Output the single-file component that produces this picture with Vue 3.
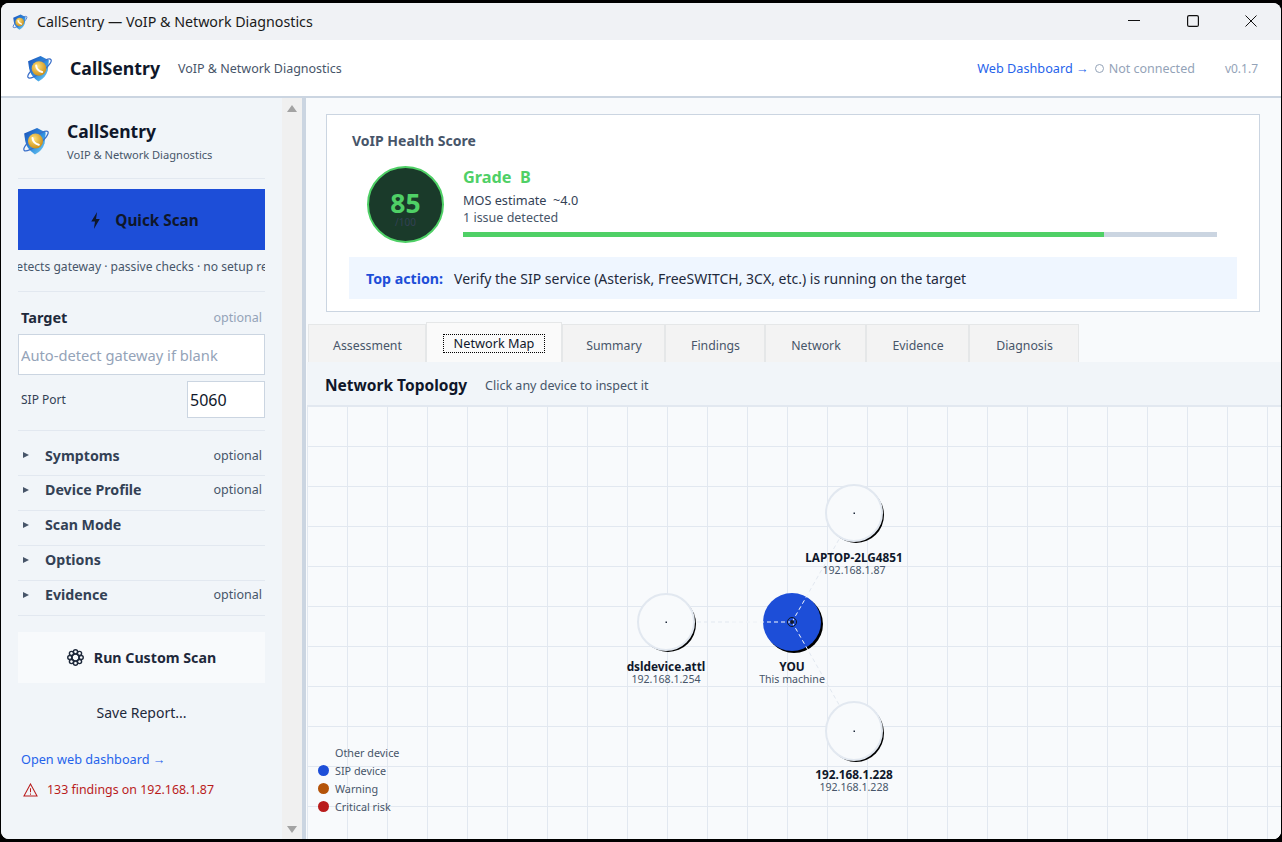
<template>
  <div class="window">
    <svg width="0" height="0" class="defs">
      <defs>
        <linearGradient id="shieldFill" x1="0" y1="0" x2="1" y2="1">
          <stop offset="0" stop-color="#1b4fb8" />
          <stop offset="0.55" stop-color="#2f8ede" />
          <stop offset="1" stop-color="#7fd6f5" />
        </linearGradient>
        <radialGradient id="coinFill" cx="0.4" cy="0.35" r="0.7">
          <stop offset="0" stop-color="#ffe27a" />
          <stop offset="1" stop-color="#c98a12" />
        </radialGradient>
        <g id="appLogo">
          <path d="M2 6 L14 1 L22 5 L21 15 Q19 22 12 25.5 Q4 20 3 13 Z" fill="url(#shieldFill)" />
          <ellipse cx="13" cy="13" rx="14" ry="4" transform="rotate(-38 13 13)" fill="none" stroke="#3a6fc9" stroke-width="1.2" />
          <circle cx="12.5" cy="13" r="7" fill="url(#coinFill)" />
          <path d="M9.8 10.2 Q10.2 15 15.6 16.4" fill="none" stroke="#fff" stroke-width="1.9" stroke-linecap="round" />
        </g>
      </defs>
    </svg>

    <div class="titlebar">
      <svg class="logo logo--title" viewBox="0 0 26 26"><use href="#appLogo" /></svg>
      <span class="titlebar-text">CallSentry — VoIP &amp; Network Diagnostics</span>
      <div class="win-controls">
        <svg viewBox="0 0 12 12" class="win-btn"><path d="M0 5.5 H12" stroke="#111" stroke-width="1" /></svg>
        <svg viewBox="0 0 12 12" class="win-btn"><rect x="0.6" y="0.6" width="10.8" height="10.8" rx="1.5" fill="none" stroke="#111" stroke-width="1.2" /></svg>
        <svg viewBox="0 0 12 12" class="win-btn"><path d="M0.5 0.5 L11.5 11.5 M11.5 0.5 L0.5 11.5" stroke="#111" stroke-width="1" /></svg>
      </div>
    </div>

    <header class="appbar">
      <svg class="logo logo--app" viewBox="0 0 26 26"><use href="#appLogo" /></svg>
      <span class="appbar-name">CallSentry</span>
      <span class="appbar-sub">VoIP &amp; Network Diagnostics</span>
      <div class="appbar-right">
        <span class="link">Web Dashboard →</span>
        <span class="status"><i class="status-dot"></i>Not connected</span>
        <span class="version">v0.1.7</span>
      </div>
    </header>

    <div class="body">
      <aside class="sidebar">
        <div class="brand">
          <svg class="logo logo--side" viewBox="0 0 26 26"><use href="#appLogo" /></svg>
          <div>
            <div class="brand-name">CallSentry</div>
            <div class="brand-sub">VoIP &amp; Network Diagnostics</div>
          </div>
        </div>

        <button class="quick-scan">
          <svg viewBox="0 0 10 16" class="bolt"><path d="M6.5 0 L1 9 H4.5 L3.5 16 L9 6.5 H5.5 Z" fill="#0f172a" /></svg>
          Quick Scan
        </button>
        <div class="quick-hint"><span>Auto-detects gateway · passive checks · no setup required</span></div>

        <div class="target">
          <div class="target-head">
            <span class="target-label">Target</span>
            <span class="muted">optional</span>
          </div>
          <input class="field field--target" placeholder="Auto-detect gateway if blank" />
          <div class="port-row">
            <span>SIP Port</span>
            <input class="field field--port" value="5060" />
          </div>
        </div>

        <div v-for="(s, i) in sections" :key="s.name" class="section" :class="{ 'section--first': i === 0 }">
          <span class="caret"></span>
          <span class="section-name">{{ s.name }}</span>
          <span v-if="s.optional" class="section-opt">optional</span>
        </div>

        <button class="custom-scan">
          <svg viewBox="0 0 18 18" class="gear">
            <g fill="none" stroke="#1e293b" stroke-width="1.5">
              <circle v-for="a in petals" :key="a" :cx="9 + 6 * Math.cos(a)" :cy="9 + 6 * Math.sin(a)" r="2.2" />
              <circle cx="9" cy="9" r="3.6" />
            </g>
          </svg>
          Run Custom Scan
        </button>
        <div class="save-report">Save Report...</div>
        <div class="open-web">Open web dashboard →</div>
        <div class="findings">
          <svg viewBox="0 0 16 15" class="warn"><path d="M8 1 L15 14 H1 Z M8 5.5 V10 M8 11.3 V12.6" fill="none" stroke="#b91c1c" stroke-width="1.1" /></svg>
          <span>133 findings on 192.168.1.87</span>
        </div>
      </aside>

      <div class="scrollbar">
        <span class="arrow arrow--up"></span>
        <span class="arrow arrow--down"></span>
      </div>

      <main class="main">
        <section class="health">
          <h2 class="health-title">VoIP Health Score</h2>
          <div class="health-row">
            <div class="gauge">
              <span class="gauge-value">85</span>
              <span class="gauge-max">/100</span>
            </div>
            <div class="health-info">
              <div class="grade">Grade&nbsp; B</div>
              <div class="mos">MOS estimate&nbsp; ~4.0</div>
              <div class="issues">1 issue detected</div>
              <div class="bar"><div class="bar-fill" :style="{ width: score + '%' }"></div></div>
            </div>
          </div>
          <div class="top-action">
            <strong>Top action:</strong>
            <span>Verify the SIP service (Asterisk, FreeSWITCH, 3CX, etc.) is running on the target</span>
          </div>
        </section>

        <nav class="tabs">
          <div v-for="t in tabs" :key="t.name" class="tab" :class="{ 'tab--active': t.active }" :style="{ width: t.width + 'px' }">
            <span :class="{ focus: t.active }">{{ t.name }}</span>
          </div>
        </nav>

        <div class="topo-head">
          <span class="topo-title">Network Topology</span>
          <span class="topo-hint">Click any device to inspect it</span>
        </div>

        <div class="canvas">
          <svg class="edges" width="975" height="434">
            <line v-for="n in others" :key="'e' + n.name" :x1="you.x" :y1="you.y" :x2="n.x" :y2="n.y" class="edge" />
            <g v-for="n in others" :key="n.name">
              <ellipse :cx="n.x + 2" :cy="n.y + 2" rx="28" :ry="n.ry" fill="#000" />
              <ellipse :cx="n.x" :cy="n.y" rx="28" :ry="n.ry" fill="#f8fafc" stroke="#e2e8f0" stroke-width="2" />
              <rect :x="n.x - 0.5" :y="n.y - 0.5" width="1.5" height="1.5" fill="#1e293b" />
            </g>
            <circle :cx="you.x + 2" :cy="you.y + 2" r="29" fill="#000" />
            <circle :cx="you.x" :cy="you.y" r="29" fill="#1d4ed8" />
            <line v-for="n in others" :key="'s' + n.name" :x1="you.x" :y1="you.y" :x2="you.x + (n.x - you.x) * n.cut" :y2="you.y + (n.y - you.y) * n.cut" class="edge edge--inner" />
            <circle :cx="you.x" :cy="you.y" r="4.5" fill="none" stroke="#0f172a" />
            <circle :cx="you.x" :cy="you.y" r="2" fill="#0f172a" />
          </svg>
          <div v-for="n in labelled" :key="'l' + n.name" class="node-label" :style="{ left: n.x + 'px', top: n.y + n.offset + 'px' }">
            <div class="node-name">{{ n.name }}</div>
            <div class="node-ip">{{ n.ip }}</div>
          </div>

          <ul class="legend">
            <li v-for="l in legend" :key="l.name"><i :style="{ background: l.color }"></i>{{ l.name }}</li>
          </ul>
        </div>
      </main>
    </div>
  </div>
</template>

<script setup>
const score = 85

const sections = [
  { name: 'Symptoms', optional: true },
  { name: 'Device Profile', optional: true },
  { name: 'Scan Mode' },
  { name: 'Options' },
  { name: 'Evidence', optional: true }
]

// gear icon is just a ring of small circles
const petals = Array.from({ length: 8 }, (_, i) => (i * Math.PI) / 4)

const tabs = [
  { name: 'Assessment', width: 118 },
  { name: 'Network Map', width: 136, active: true },
  { name: 'Summary', width: 103 },
  { name: 'Findings', width: 100 },
  { name: 'Network', width: 101 },
  { name: 'Evidence', width: 103 },
  { name: 'Diagnosis', width: 110 }
]

const you = { name: 'YOU', ip: 'This machine', x: 485, y: 216, offset: 38 }
const others = [
  { name: 'LAPTOP-2LG4851', ip: '192.168.1.87', x: 547, y: 107, ry: 28, cut: 0.27, offset: 38 },
  { name: 'dsldevice.attl', ip: '192.168.1.254', x: 359, y: 216, ry: 28, cut: 0.48, offset: 38 },
  { name: '192.168.1.228', ip: '192.168.1.228', x: 547, y: 325, ry: 29, cut: 0.27, offset: 37 }
]
const labelled = [...others, you]

const legend = [
  { name: 'Other device', color: 'transparent' },
  { name: 'SIP device', color: '#1d4ed8' },
  { name: 'Warning', color: '#b45309' },
  { name: 'Critical risk', color: '#b91c1c' }
]
</script>

<style scoped>
.window {
  box-sizing: border-box;
  margin-top: 3px;
  margin-left: 1px;
  height: 836px;
  width: 1280px;
  display: flex;
  flex-direction: column;
  border-radius: 8px;
  overflow: hidden;
  background: #fff;
  font-family: "Noto Sans", "Open Sans", sans-serif;
  color: #0f172a;
}
.defs {
  position: absolute;
}
.titlebar {
  height: 37px;
  flex-shrink: 0;
  display: flex;
  align-items: center;
  background: #f0f2f5;
  padding-left: 11px;
}
.titlebar-text {
  margin-left: 9px;
  font-size: 14.25px;
  color: #1a1a1a;
}
.win-controls {
  margin-left: auto;
  display: flex;
  gap: 46.5px;
  padding: 0 24px 2px 0;
}
.win-btn {
  width: 12px;
  height: 12px;
}
.logo--title {
  width: 16px;
  height: 16px;
}
.appbar {
  height: 58px;
  flex-shrink: 0;
  box-sizing: border-box;
  border-bottom: 2px solid #cbd5e1;
  display: flex;
  align-items: center;
  padding: 0 23px 0 25px;
  background: #fff;
}
.logo--app {
  width: 27px;
  height: 27px;
}
.appbar-name {
  margin-left: 17px;
  font-size: 17.7px;
  font-weight: 700;
  color: #0f172a;
}
.appbar-sub {
  margin-left: 18px;
  font-size: 12.5px;
  color: #475569;
}
.appbar-right {
  margin-left: auto;
  display: flex;
  align-items: center;
  font-size: 12.7px;
}
.link {
  color: #2563eb;
}
.status {
  margin-left: 6px;
  display: flex;
  align-items: center;
  gap: 5px;
  color: #94a3b8;
  font-size: 12.5px;
}
.status-dot {
  width: 9px;
  height: 9px;
  box-sizing: border-box;
  border: 1px solid #94a3b8;
  border-radius: 50%;
}
.version {
  margin-left: 30px;
  color: #94a3b8;
  font-size: 12px;
}
.body {
  flex: 1;
  min-height: 0;
  display: flex;
}
.sidebar {
  width: 281px;
  flex-shrink: 0;
  box-sizing: border-box;
  background: #f1f5f9;
  padding: 0 17px;
  display: flex;
  flex-direction: column;
}
.brand {
  height: 81px;
  flex-shrink: 0;
  box-sizing: border-box;
  border-bottom: 1px solid #e2e8f0;
  display: flex;
  align-items: center;
  gap: 17px;
  padding: 5px 0 0 4px;
}
.logo--side {
  width: 28px;
  height: 28px;
}
.brand-name {
  font-size: 17.5px;
  font-weight: 700;
  line-height: 24px;
  color: #0f172a;
}
.brand-sub {
  margin-top: 4px;
  font-size: 11.1px;
  line-height: 15px;
  color: #475569;
}
.quick-scan {
  margin-top: 10px;
  height: 61px;
  flex-shrink: 0;
  border: 0;
  background: #1d4ed8;
  color: #0f172a;
  font: 700 15.3px "Noto Sans", sans-serif;
  display: flex;
  align-items: center;
  justify-content: center;
  gap: 14px;
  padding: 1px 0 0 6px;
}
.bolt {
  width: 11px;
  height: 17px;
}
.quick-hint {
  height: 42px;
  flex-shrink: 0;
  box-sizing: border-box;
  border-bottom: 1px solid #e2e8f0;
  overflow: hidden;
  display: flex;
  justify-content: center;
  padding-top: 8px;
  font-size: 12.1px;
  color: #475569;
  white-space: nowrap;
}
.quick-hint span {
  flex-shrink: 0;
}
.target {
  height: 139px;
  flex-shrink: 0;
  box-sizing: border-box;
  border-bottom: 1px solid #e2e8f0;
  padding-top: 14px;
}
.target-head {
  display: flex;
  justify-content: space-between;
  align-items: center;
  height: 22px;
  padding: 0 3px;
}
.target-label {
  font-size: 14.5px;
  font-weight: 700;
  color: #1e293b;
}
.muted {
  font-size: 12.5px;
  color: #94a3b8;
}
.field {
  box-sizing: border-box;
  background: #fff;
  border: 1px solid #cbd5e1;
  border-radius: 0;
  font: 16px "Noto Sans", sans-serif;
  color: #0f172a;
  padding: 0 2px;
  outline: none;
}
.field::placeholder {
  color: #94a3b8;
  font-size: 14.7px;
}
.field--target {
  display: block;
  width: 100%;
  height: 41px;
  margin-top: 6px;
}
.port-row {
  margin-top: 6px;
  display: flex;
  justify-content: space-between;
  align-items: center;
  padding-left: 3px;
  font-size: 12px;
  color: #334155;
}
.field--port {
  width: 78px;
  height: 37px;
}
.section {
  height: 35px;
  flex-shrink: 0;
  box-sizing: border-box;
  border-bottom: 1px solid #e2e8f0;
  display: flex;
  align-items: center;
  padding: 0 3px 7px 5px;
}
.section--first {
  height: 45px;
  padding-top: 11px;
}
.caret {
  width: 0;
  height: 0;
  border-left: 6px solid #475569;
  border-top: 3px solid transparent;
  border-bottom: 3px solid transparent;
}
.section-name {
  margin-left: 16px;
  font-size: 14.2px;
  font-weight: 700;
  color: #334155;
}
.section-opt {
  margin-left: auto;
  font-size: 12.5px;
  color: #475569;
}
.custom-scan {
  margin-top: 16px;
  height: 51px;
  flex-shrink: 0;
  border: 0;
  background: #f8fafc;
  color: #1e293b;
  font: 700 14.2px "Noto Sans", sans-serif;
  display: flex;
  align-items: center;
  justify-content: center;
  gap: 10px;
  padding: 0;
}
.gear {
  width: 17px;
  height: 17px;
}
.save-report {
  margin-top: 20px;
  text-align: center;
  font-size: 14px;
  line-height: 20px;
  color: #1e293b;
}
.open-web {
  margin-top: 27px;
  padding-left: 3px;
  font-size: 12.7px;
  line-height: 18px;
  color: #2563eb;
}
.findings {
  margin-top: 13px;
  padding-left: 5px;
  display: flex;
  align-items: center;
  gap: 9px;
  font-size: 12.4px;
  line-height: 18px;
  color: #b91c1c;
}
.warn {
  width: 15px;
  height: 14px;
}
.scrollbar {
  width: 20px;
  flex-shrink: 0;
  background: #f0f0f0;
  display: flex;
  flex-direction: column;
  justify-content: space-between;
  align-items: center;
  padding: 7px 0 6px;
  box-sizing: border-box;
}
.arrow {
  width: 0;
  height: 0;
  border-left: 5px solid transparent;
  border-right: 5px solid transparent;
}
.arrow--up {
  border-bottom: 7px solid #a3a3a3;
}
.arrow--down {
  border-top: 7px solid #a3a3a3;
}
.main {
  flex: 1;
  min-width: 0;
  display: flex;
  flex-direction: column;
  background: #f8fafc;
  border-left: 4px solid #cbd5e1;
}
.health {
  margin: 16px 21px 0 20px;
  height: 198px;
  flex-shrink: 0;
  box-sizing: border-box;
  background: #fff;
  border: 1px solid #cbd5e1;
  padding: 0 22px;
}
.health-title {
  margin: 16px 0 0 3px;
  font-size: 14px;
  line-height: 20px;
  font-weight: 700;
  color: #475569;
}
.health-row {
  margin-top: 15px;
  display: flex;
  padding-left: 18px;
}
.gauge {
  width: 77px;
  height: 77px;
  flex-shrink: 0;
  box-sizing: border-box;
  border-radius: 50%;
  background: #1a3a2a;
  border: 2px solid #4fd066;
  padding-top: 8px;
  display: flex;
  flex-direction: column;
  align-items: center;
  justify-content: center;
}
.gauge-value {
  font-size: 26.5px;
  font-weight: 700;
  line-height: 26px;
  color: #4fd066;
}
.gauge-max {
  font-size: 10px;
  line-height: 12px;
  color: #334155;
}
.health-info {
  flex: 1;
  margin-left: 19px;
  margin-right: 20px;
}
.grade {
  font-size: 16.3px;
  font-weight: 700;
  line-height: 22px;
  color: #4fd066;
}
.mos,
.issues {
  font-size: 12.7px;
  line-height: 18px;
  color: #334155;
}
.mos {
  margin-top: 3px;
}
.issues {
  color: #475569;
  font-size: 12.5px;
}
.bar {
  margin-top: 5px;
  height: 5px;
  background: #cbd5e1;
}
.bar-fill {
  height: 100%;
  background: #4fd066;
}
.top-action {
  margin-top: 14px;
  height: 42px;
  display: flex;
  align-items: center;
  gap: 11px;
  padding-left: 17px;
  background: #eff6ff;
  font-size: 14px;
  color: #1e293b;
}
.top-action strong {
  color: #1d4ed8;
  font-size: 14.2px;
  font-weight: 700;
}
.tabs {
  margin-top: 10px;
  height: 40px;
  flex-shrink: 0;
  display: flex;
  align-items: flex-end;
  padding-left: 2px;
}
.tab {
  height: 38px;
  box-sizing: border-box;
  flex-shrink: 0;
  background: #f3f3f3;
  border: 1px solid #e5e7e8;
  border-bottom: 0;
  display: flex;
  align-items: center;
  justify-content: center;
  font-size: 12.3px;
  color: #475569;
  padding: 4px 0 0 1px;
}
.tab--active {
  height: 40px;
  background: #fafafa;
  color: #0f172a;
  font-size: 12.7px;
  padding: 1px 0 0;
}
.focus {
  outline: 1px dotted #000;
  padding: 0 10px;
  line-height: 17px;
}
.topo-head {
  height: 44px;
  flex-shrink: 0;
  margin-left: 1px;
  box-sizing: border-box;
  background: #f1f5f9;
  border-bottom: 1px solid #e2e8f0;
  display: flex;
  align-items: center;
  padding: 3px 0 0 18px;
  gap: 18px;
}
.topo-title {
  font-size: 15.5px;
  font-weight: 700;
  color: #0f172a;
}
.topo-hint {
  font-size: 12.5px;
  color: #475569;
}
.canvas {
  position: relative;
  flex: 1;
  min-height: 0;
  margin-left: 1px;
  overflow: hidden;
  background-color: #f8fafc;
  background-image:
    linear-gradient(to right, #e2e8f0 1px, transparent 1px),
    linear-gradient(to bottom, #e2e8f0 1px, transparent 1px);
  background-size: 40px 40px;
}
.edges {
  position: absolute;
  left: 0;
  top: 0;
}
.edge {
  stroke: #e2e8f0;
  stroke-width: 1;
  stroke-dasharray: 4 3;
}
.edge--inner {
  stroke: #f8fafc;
}
.node-label {
  position: absolute;
  transform: translateX(-50%);
  text-align: center;
  white-space: nowrap;
}
.node-name {
  font-size: 11.8px;
  font-weight: 700;
  line-height: 13px;
  color: #0f172a;
}
.node-ip {
  font-size: 10.6px;
  line-height: 12px;
  color: #475569;
}
.legend {
  position: absolute;
  left: 11px;
  top: 337px;
  margin: 0;
  padding: 0;
  list-style: none;
  font-size: 10.8px;
  color: #475569;
}
.legend li {
  display: flex;
  align-items: center;
  height: 18px;
  gap: 6px;
}
.legend i {
  width: 11px;
  height: 11px;
  border-radius: 50%;
}
</style>

<style>
html,
body {
  background: #000;
  margin: 0;
  overflow: hidden;
}
</style>
